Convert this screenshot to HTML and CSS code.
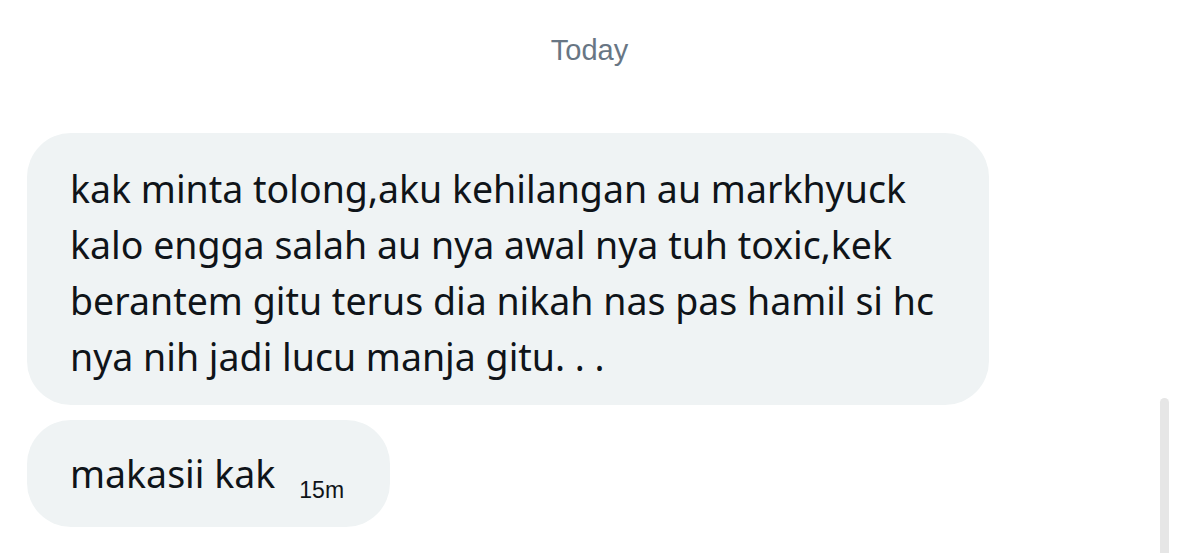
FILE: index.html
```html
<!DOCTYPE html>
<html lang="id">
<head>
<meta charset="utf-8">
<title>Chat</title>
<link rel="stylesheet" href="styles.css">
</head>
<body>
<main class="chat">
  <div class="day">Today</div>
  <div class="msg msg-long">kak minta tolong,aku kehilangan au markhyuck<br>kalo engga salah au nya awal nya tuh toxic,kek<br>berantem gitu terus dia nikah nas pas hamil si hc<br>nya nih jadi lucu manja gitu. . .</div>
  <div class="msg msg-short"><span class="text">makasii kak</span><span class="time">15m</span></div>
</main>
<div class="scrollbar"></div>
</body>
</html>
```

FILE: styles.css
```css
html, body {
  margin: 0;
  padding: 0;
  background: #ffffff;
  height: 553px;
  overflow: hidden;
}
.chat {
  display: flex;
  flex-direction: column;
  align-items: flex-start;
  padding: 32px 0 0 27px;
}
.day {
  align-self: stretch;
  margin-left: -27px;
  text-align: center;
  font-family: "Liberation Sans", Arial, sans-serif;
  font-size: 29px;
  line-height: 36px;
  height: 36px;
  color: #687684;
}
.msg {
  background: #eff3f4;
  color: #0f1419;
  font-family: "Noto Sans", sans-serif;
  font-size: 37.5px;
  line-height: 56px;
  white-space: nowrap;
}
.msg-long {
  margin-top: 65px;
  width: 962px;
  box-sizing: border-box;
  padding: 28px 0 20px 43px;
  border-radius: 44px;
}
.msg-short {
  margin-top: 15px;
  width: 363px;
  height: 107px;
  box-sizing: border-box;
  padding: 0 0 0 43px;
  border-radius: 44px;
  display: flex;
  align-items: center;
}
.time {
  font-family: "Liberation Sans", Arial, sans-serif;
  font-size: 23px;
  line-height: 23px;
  margin-left: 24px;
  align-self: flex-end;
  margin-bottom: 25px;
}
.scrollbar {
  position: absolute;
  left: 1160px;
  top: 398px;
  width: 9px;
  height: 160px;
  background: #e6e6e6;
  border-radius: 5px 5px 0 0;
}
```
